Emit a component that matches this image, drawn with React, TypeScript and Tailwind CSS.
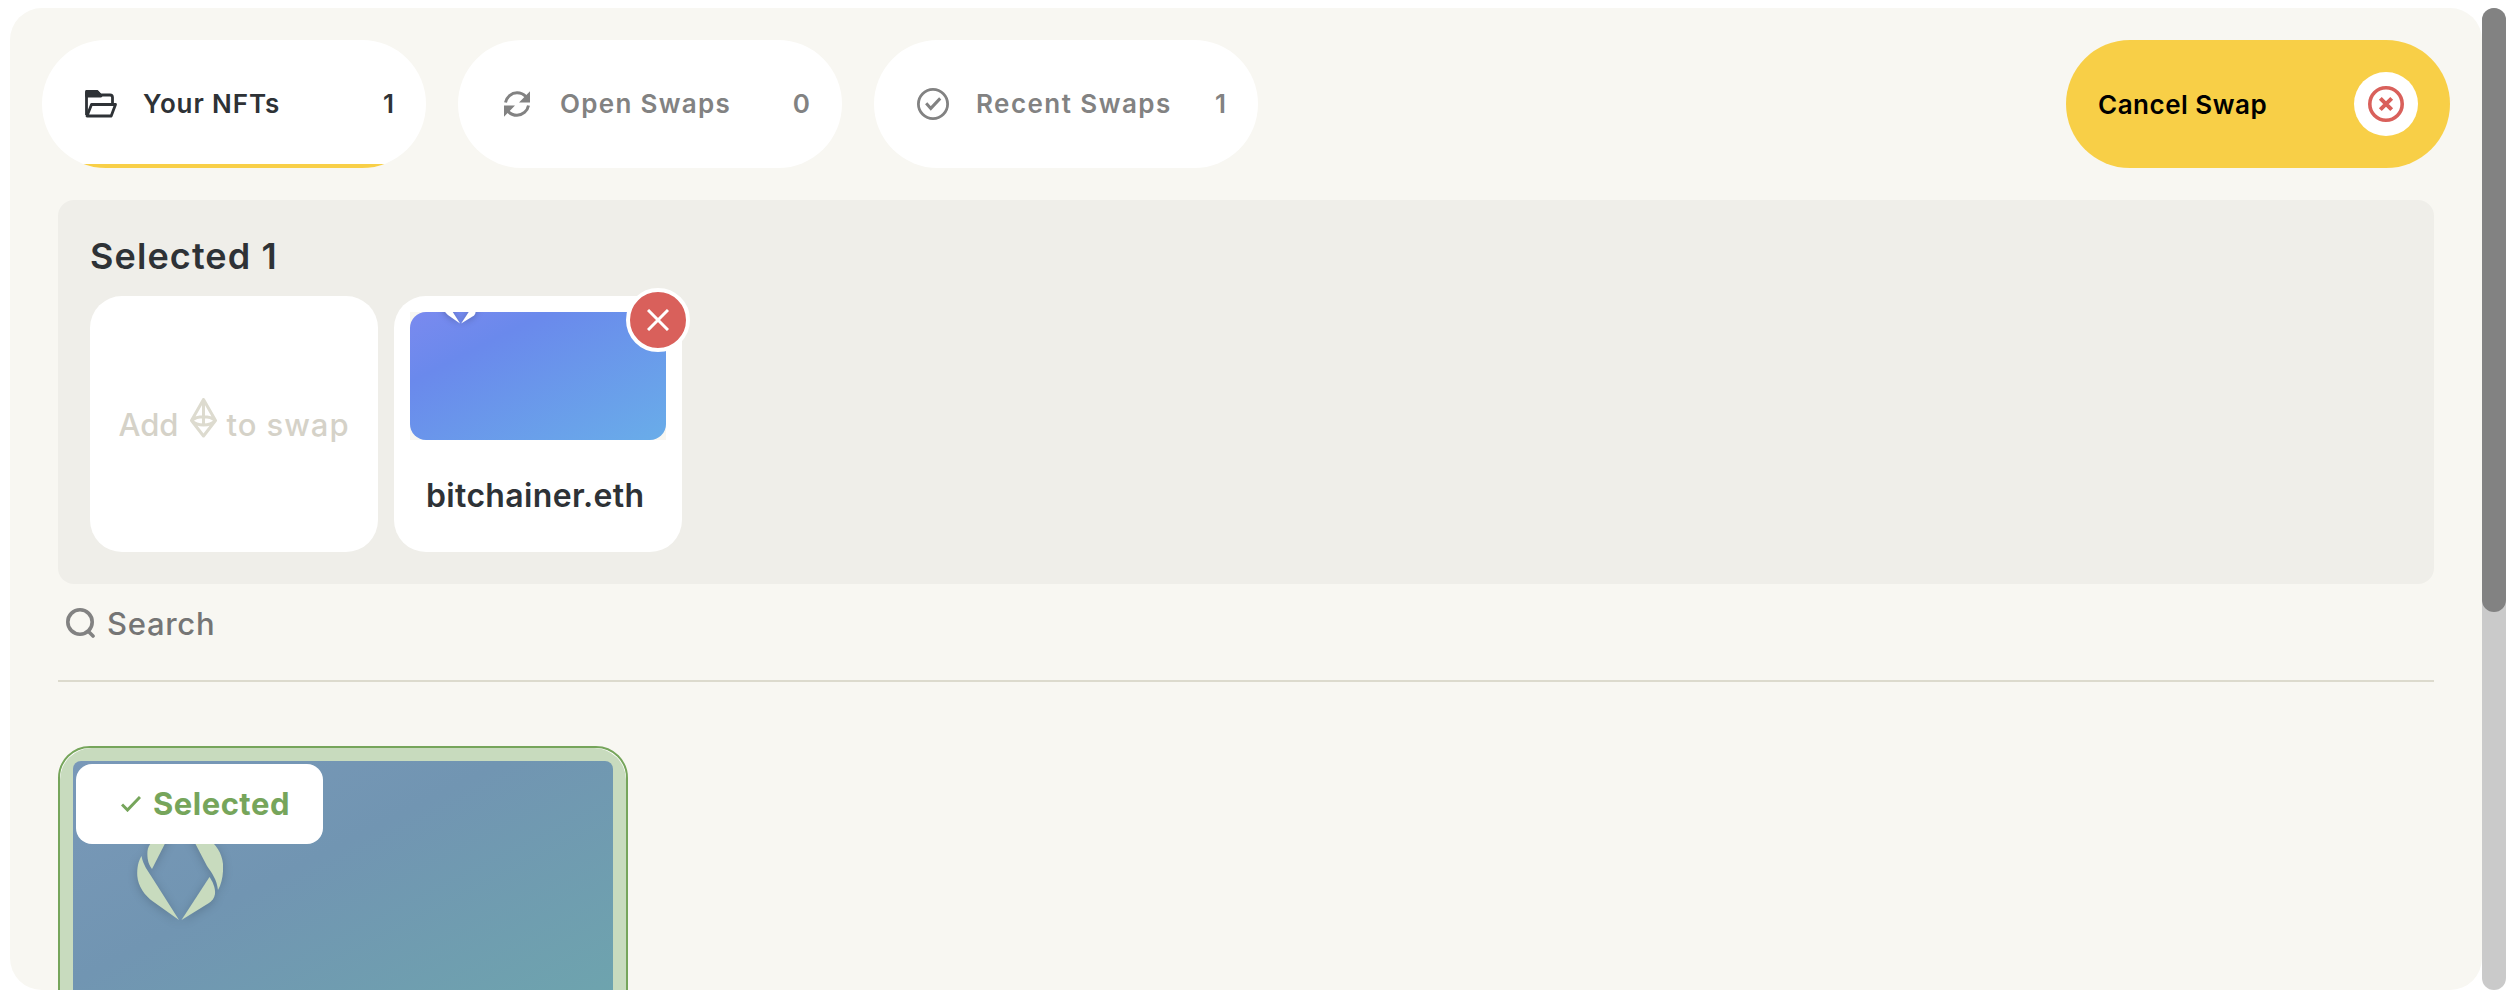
import React from "react";

const tabBase = "relative flex h-32 w-96 items-center overflow-hidden rounded-full bg-white text-[26px] font-semibold leading-8";

function FolderIcon() {
  return (
    <svg className="ml-[43px] h-[28px] w-[32px] shrink-0" viewBox="0 0 32 28" fill="none" stroke="currentColor" strokeWidth="2.8" strokeLinejoin="round">
      <path d="M1.500 25V3.500a2 2 0 0 1 2-2h8.500l3.500 3.500H25a2.500 2.500 0 0 1 2.500 2.500V14" />
      <path d="M1.500 1.500h10.500l4 4.500h-14.500z" fill="currentColor" />
      <path d="M2 26 6.500 14.500h24L26.200 26z" />
    </svg>
  );
}

function SwapIcon() {
  return (
    <svg className="ml-[46px] h-[26px] w-[26px] shrink-0" viewBox="0 0 26 26" fill="none">
      <path d="M1.500 11.500C2.500 6 7.500 1.700 13 1.700c3.800 0 6.800 1.500 9 4M24.500 14.500C23.500 20 18.500 24.300 13 24.300c-3.800 0-6.800-1.500-9-4" stroke="currentColor" strokeWidth="3" />
      <path d="M26 .300V11.500H15zM0 25.700V14.500H11z" fill="currentColor" />
    </svg>
  );
}

function CheckCircleIcon() {
  return (
    <svg className="ml-[43px] h-8 w-8 shrink-0" viewBox="0 0 32 32" fill="none" stroke="currentColor">
      <circle cx="16" cy="16" r="14.600" strokeWidth="2.800" />
      <path d="m9.200 15.200 4.600 5.200 9.400-10" strokeWidth="3" />
    </svg>
  );
}

function EthIcon() {
  return (
    <svg className="ml-[11px] mr-[10px] h-[40px] w-[27px] -translate-y-[7px]" viewBox="0 0 27 40" fill="none" stroke="#dddbcf" strokeWidth="3" strokeLinejoin="round">
      <path d="M13.500 1.500 25.500 22.500 13.500 38 1.500 22.500zM13.500 1.500V26M1.500 22.500c6-5 18-5 24 0M1.500 22.500c6 6 18 6 24 0" />
    </svg>
  );
}

function EnsMark({ className }: { className: string }) {
  return (
    <svg className={className} viewBox="0 0 86 98" fill="currentColor">
      <path d="M38.500 0 15 46C11 41 10 35 10.500 28 11 22 16 17 21 13z" />
      <path d="M4.500 33C6 42 11 48 16 56L42 97 16 78.500C8 73 1 63 .300 53 0 45 1 39 4.500 33z" />
      <path d="M47.500 0 70 15C79 21 85 30 86 41 86.500 51 85 60 81 67 80 57 75 50 70 43z" />
      <path d="M72.500 54C76 59 78.500 65 78 71 77.500 75 75 78 72 80L44.500 97z" />
    </svg>
  );
}

export default function App() {
  return (
    <main className="h-[1002px] w-[2520px] overflow-hidden bg-white pl-[10px] pt-2 font-['Inter',sans-serif] text-[#2e3236]">
      <div className="flex h-[982px] w-[2496px]">
        <section className="h-[982px] w-[2472px] overflow-hidden rounded-[32px] bg-[#f8f7f2]">
          <header className="flex items-center gap-8 pl-8 pr-8 pt-8">
            <button className={tabBase}>
              <FolderIcon />
              <span className="ml-[26px] tracking-[0.9px]">Your NFTs</span>
              <span className="ml-auto pr-8">1</span>
              <span className="absolute inset-x-0 bottom-0 h-1 bg-[#f8cf47]" />
            </button>
            <button className={`${tabBase} text-[#828282]`}>
              <SwapIcon />
              <span className="ml-[30px] tracking-[1.3px]">Open Swaps</span>
              <span className="ml-auto pr-8">0</span>
            </button>
            <button className={`${tabBase} text-[#828282]`}>
              <CheckCircleIcon />
              <span className="ml-[27px] tracking-[1.45px]">Recent Swaps</span>
              <span className="ml-auto pr-8">1</span>
            </button>
            <button className="ml-auto flex h-32 w-96 items-center justify-between rounded-full bg-[#f8cf47] px-8 text-[26px] font-semibold text-black">
              <span className="tracking-[0.5px]">Cancel Swap</span>
              <span className="flex h-16 w-16 items-center justify-center rounded-full bg-white text-[#d9605b]">
                <svg className="h-9 w-9" viewBox="0 0 36 36" fill="none" stroke="currentColor">
                  <circle cx="18" cy="18" r="16.200" strokeWidth="3.600" />
                  <path d="m12.300 12.300 11.400 11.400m0-11.400L12.300 23.700" strokeWidth="4" />
                </svg>
              </span>
            </button>
          </header>

          <div className="mx-12 mt-8 h-96 rounded-2xl bg-[#efeee9] px-8 pt-8">
            <h2 className="h-16 text-[36px] font-semibold leading-[48px] tracking-[1.1px]">Selected 1</h2>
            <div className="flex gap-4">
              <div className="flex h-64 w-72 items-center justify-center rounded-[32px] bg-white pt-[2px] text-[31px] font-medium text-[#d5d2c8]">
                <span>Add</span>
                <EthIcon />
                <span className="tracking-[0.95px]">to swap</span>
              </div>
              <div className="relative h-64 w-72 rounded-[32px] bg-white p-4">
                <div className="h-32 bg-[#f8f7f2]">
                  <div className="h-32 overflow-hidden rounded-2xl bg-[linear-gradient(153deg,#7a8aef_0%,#6a89ec_27%,#69ade9_100%)] text-white">
                    <EnsMark className="-mt-[30px] ml-[30px] h-[42px] w-[41px] drop-shadow-[0_1px_3px_rgba(0,0,0,0.25)]" />
                  </div>
                </div>
                <p className="mt-[33px] pl-4 text-[32px] font-semibold leading-[46px] tracking-[0.35px]">bitchainer.eth</p>
                <button className="absolute -right-2 -top-2 flex h-16 w-16 items-center justify-center rounded-full border-4 border-white bg-[#d9605b]">
                  <svg className="h-[22px] w-[22px]" viewBox="0 0 22 22" stroke="white" strokeWidth="3">
                    <path d="m1 1 20 20M21 1 1 21" />
                  </svg>
                </button>
              </div>
            </div>
          </div>

          <label className="mx-12 flex h-[98px] items-center border-b-2 border-[#dcdacd] pb-[18px] pl-2 text-[#757575]">
            <svg className="h-[30px] w-[30px]" viewBox="0 0 30 30" fill="none" stroke="#828282" strokeWidth="3.600" strokeLinecap="round">
              <circle cx="14" cy="14" r="12.200" />
              <path d="m23.500 24.500 3.500 3.500" />
            </svg>
            <span className="ml-[11px] pt-[2px] text-[31px] font-medium tracking-[0.7px]">Search</span>
          </label>

          <article className="mx-12 mt-16 h-[620px] w-[570px] overflow-hidden rounded-[32px] border-2 border-[#76a55b] bg-white">
            <div className="h-full rounded-[32px] bg-[#c8dbbe] p-[13px]">
              <div className="relative h-[540px] overflow-hidden rounded-lg bg-[linear-gradient(153deg,#7998b8_0%,#7195b2_27%,#6da7ad_70%,#70b5ae_100%)]">
                <EnsMark className="ml-16 mt-[62px] h-[98px] w-[86px] text-[#c8dbbe] drop-shadow-[0_2px_5px_rgba(0,0,0,0.18)]" />
                <div className="absolute left-[3px] top-[3px] flex h-20 w-[247px] items-center rounded-2xl bg-white pl-[45px] text-[31px] font-bold text-[#76a55b]">
                  <svg className="h-4 w-5" viewBox="0 0 20 16" fill="none" stroke="currentColor" strokeWidth="3">
                    <path d="m1 8.500 5.500 5.500L19 1" />
                  </svg>
                  <span className="ml-[12px] tracking-[0.5px]">Selected</span>
                </div>
              </div>
            </div>
          </article>
        </section>
        <div className="h-[982px] w-6 rounded-full bg-[#cacaca]">
          <div className="h-[604px] w-6 rounded-full bg-[#828282]" />
        </div>
      </div>
    </main>
  );
}
